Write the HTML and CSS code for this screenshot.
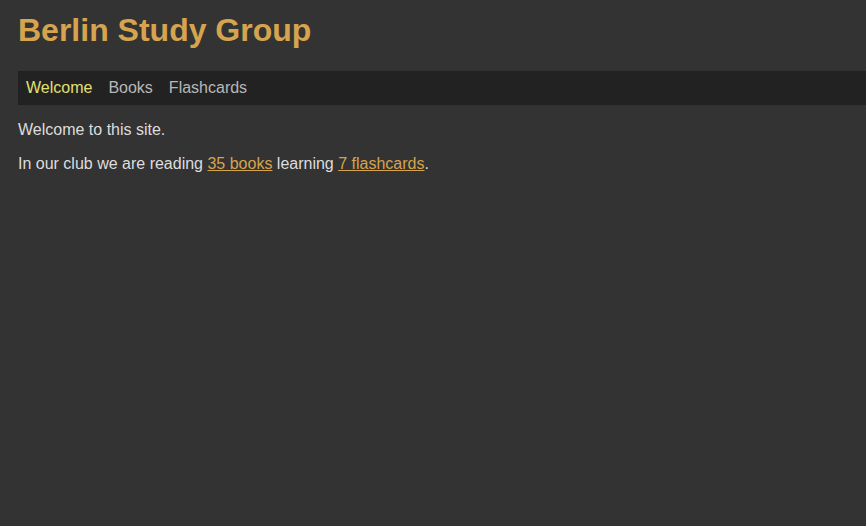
FILE: index.html
```html
<!DOCTYPE html>
<html lang="en">
<head>
<meta charset="utf-8">
<title>Berlin Study Group</title>
<link rel="stylesheet" href="styles.css">
</head>
<body>
<div class="page">
  <h1 class="title">Berlin Study Group</h1>
  <nav class="nav">
    <a class="nav-link active" href="#">Welcome</a>
    <a class="nav-link" href="#">Books</a>
    <a class="nav-link" href="#">Flashcards</a>
  </nav>
  <main class="content">
    <p class="text">Welcome to this site.</p>
    <p class="text">In our club we are reading <a class="link" href="#">35 books</a> learning <a class="link" href="#">7 flashcards</a>.</p>
  </main>
</div>
</body>
</html>
```

FILE: styles.css
```css
html, body {
  margin: 0;
  padding: 0;
  background: #333333;
  height: 100%;
}
body {
  font-family: "Liberation Sans", Arial, sans-serif;
  font-size: 16px;
  color: #dddddd;
}
.page {
  padding: 12px 0 0 18px;
}
.title {
  margin: 0 0 22px 0;
  font-size: 32px;
  font-weight: bold;
  color: #d6a44e;
  line-height: 37px;
}
.nav {
  display: flex;
  gap: 16px;
  background: #222222;
  padding: 8px 8px 8px 8px;
  line-height: 18px;
}
.nav-link {
  color: #b8b8b8;
  text-decoration: none;
}
.nav-link.active {
  color: #e3e070;
}
.content {
  padding-top: 16px;
}
.text {
  margin: 0 0 16px 0;
  line-height: 18px;
}
.link {
  color: #d6a44e;
  text-decoration: underline;
}
```
